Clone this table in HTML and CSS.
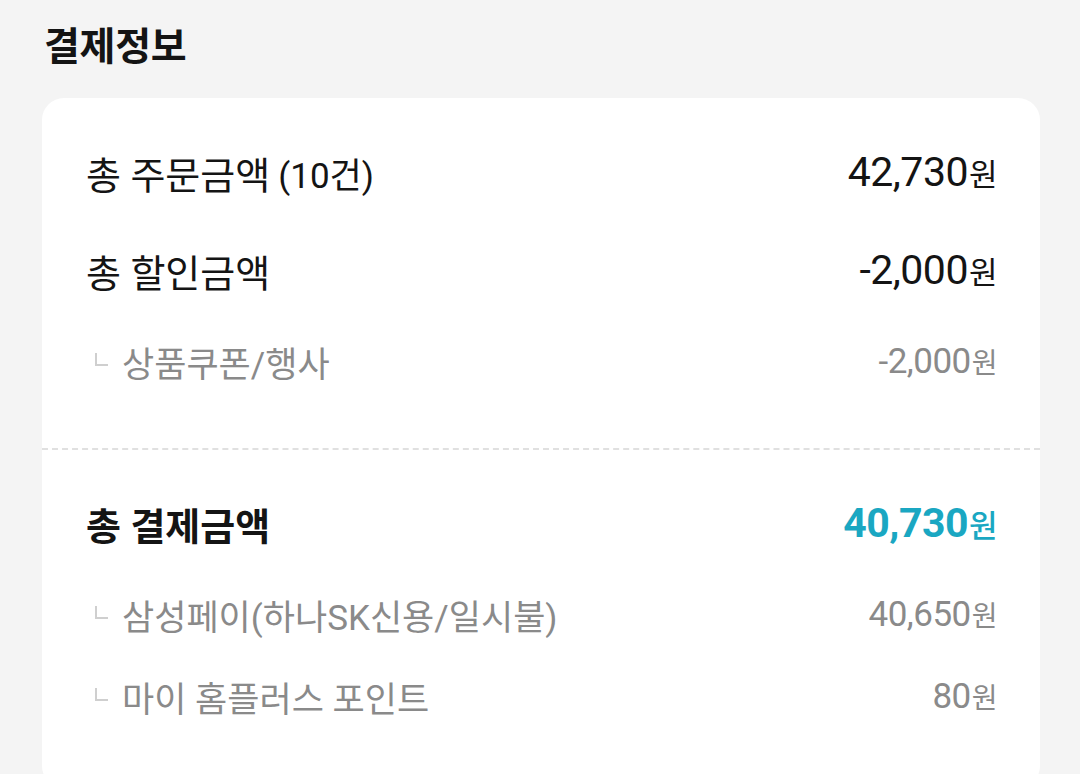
FILE: index.html
```html
<!DOCTYPE html>
<html lang="ko">
<head>
<meta charset="utf-8">
<link rel="stylesheet" href="styles.css">
</head>
<body>
<main class="page">
  <h1 class="title">결제정보</h1>
  <section class="card">
    <div class="group group-top">
      <div class="row row-main">
        <span class="label">총 주문금액 <span class="count">(10건)</span></span>
        <span class="amount">42,730<span class="won">원</span></span>
      </div>
      <div class="row row-main">
        <span class="label">총 할인금액</span>
        <span class="amount">-2,000<span class="won">원</span></span>
      </div>
      <div class="row row-sub">
        <span class="label"><i class="branch"></i>상품쿠폰/행사</span>
        <span class="amount">-2,000<span class="won">원</span></span>
      </div>
    </div>
    <div class="group group-bottom">
      <div class="row row-main row-total">
        <span class="label">총 결제금액</span>
        <span class="amount">40,730<span class="won">원</span></span>
      </div>
      <div class="row row-sub">
        <span class="label"><i class="branch"></i>삼성페이(하나SK신용/일시불)</span>
        <span class="amount">40,650<span class="won">원</span></span>
      </div>
      <div class="row row-sub row-last">
        <span class="label"><i class="branch"></i>마이 홈플러스 포인트</span>
        <span class="amount">80<span class="won">원</span></span>
      </div>
    </div>
  </section>
</main>
</body>
</html>
```
FILE: styles.css
```css
html, body {
  margin: 0;
  padding: 0;
  background: #f4f4f4;
}
body {
  font-family: Roboto, "Noto Sans CJK KR", sans-serif;
  color: #151515;
  height: 774px;
  overflow: hidden;
}
.page {
  padding: 0 40px 0 42px;
}
.title {
  margin: 0;
  height: 98px;
  box-sizing: border-box;
  padding-top: 21px;
  padding-left: 2px;
  font-size: 39px;
  line-height: 52px;
  font-weight: 700;
  letter-spacing: -0.3px;
  color: #141414;
}
.card {
  background: #fff;
  border-radius: 22px;
  height: 690px;
}
.group {
  padding: 0 43px 0 44px;
}
.group-top {
  padding-top: 38px;
  padding-bottom: 57px;
  border-bottom: 2px dashed #e0e0e0;
}
.group-bottom {
  padding-top: 37px;
}
.row {
  display: flex;
  justify-content: space-between;
  align-items: center;
}
.row-main {
  height: 72px;
  font-size: 38px;
  font-weight: 400;
  color: #141414;
}
.row + .row {
  margin-top: 26px;
}
.row-sub {
  height: 60px;
  font-size: 35px;
  color: #8a8a8a;
}
.row-main + .row-sub {
  margin-top: 25px;
}
.row-sub + .row-sub {
  margin-top: 22px;
}
.label {
  display: flex;
  align-items: center;
  white-space: nowrap;
}
.count {
  font-weight: 400;
  font-size: 35px;
  margin-left: 8px;
}
.amount {
  font-family: Roboto, "Noto Sans CJK KR", sans-serif;
  font-weight: 400;
  font-size: 41px;
  letter-spacing: -0.5px;
  white-space: nowrap;
}
.row-sub .amount {
  font-size: 35px;
}
.won {
  font-family: "Noto Sans CJK KR", sans-serif;
  font-size: 31px;
  font-weight: 400;
  margin-left: 1px;
}
.row-sub .won {
  font-size: 28px;
}
.row-total .label {
  font-weight: 700;
}
.row-total .amount {
  color: #1aa7c2;
  font-weight: 700;
}
.row-total .won {
  font-weight: 500;
}
.branch {
  display: inline-block;
  width: 11px;
  height: 11px;
  border-left: 2px solid #cfcfcf;
  border-bottom: 2px solid #cfcfcf;
  margin-left: 9px;
  margin-right: 14px;
  margin-top: -4px;
}
```
